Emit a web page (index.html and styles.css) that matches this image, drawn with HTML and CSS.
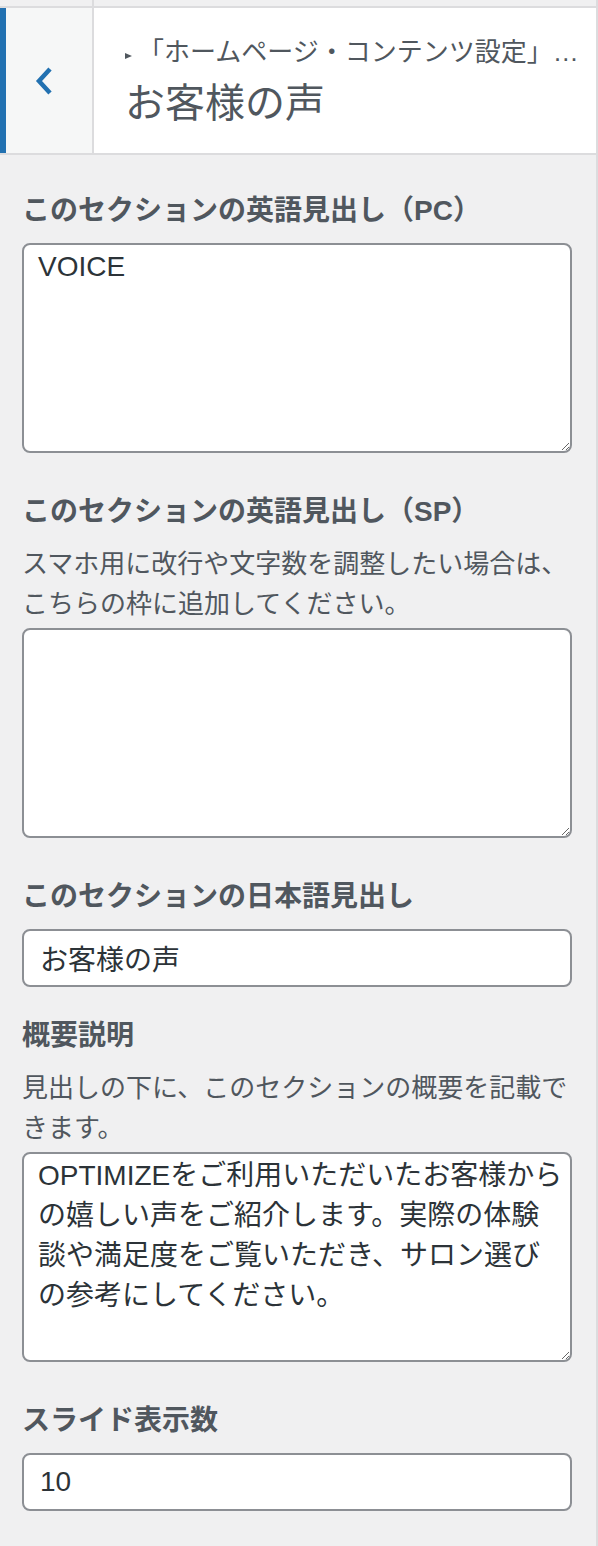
FILE: index.html
```html
<!DOCTYPE html>
<html lang="ja">
<head>
  <meta charset="UTF-8">
  <meta name="viewport" content="width=device-width, initial-scale=1.0">
  <title>お客様の声 - カスタマイズ</title>
  <link rel="stylesheet" href="styles.css">
</head>
<body>
  <div class="sidebar">
    <div class="prev-section"><span class="prev-back"></span></div>

    <div class="section-meta">
      <button class="back-btn" type="button" aria-label="戻る">
        <svg width="24" height="32" viewBox="0 0 24 32">
          <polyline points="18,4 7,16 18,28" fill="none" stroke="#2271b1" stroke-width="4.5"/>
        </svg>
      </button>
      <div class="section-title">
        <span class="customize-action"><span class="arrow"></span>「ホームページ・コンテンツ設定」…</span>
        <h3>お客様の声</h3>
      </div>
    </div>

    <ul class="controls">
      <li class="control">
        <label class="control-title" for="title-en-pc">このセクションの英語見出し（PC）</label>
        <textarea id="title-en-pc">VOICE</textarea>
      </li>
      <li class="control">
        <label class="control-title" for="title-en-sp">このセクションの英語見出し（SP）</label>
        <span class="description">スマホ用に改行や文字数を調整したい場合は、こちらの枠に追加してください。</span>
        <textarea id="title-en-sp"></textarea>
      </li>
      <li class="control">
        <label class="control-title" for="title-ja">このセクションの日本語見出し</label>
        <input type="text" id="title-ja" value="お客様の声">
      </li>
      <li class="control">
        <label class="control-title" for="summary">概要説明</label>
        <span class="description">見出しの下に、このセクションの概要を記載できます。</span>
        <textarea id="summary">OPTIMIZEをご利用いただいたお客様からの嬉しい声をご紹介します。実際の体験談や満足度をご覧いただき、サロン選びの参考にしてください。</textarea>
      </li>
      <li class="control">
        <label class="control-title" for="slide-count">スライド表示数</label>
        <input type="text" id="slide-count" value="10">
      </li>
    </ul>
  </div>
</body>
</html>
```

FILE: styles.css
```css
body {
  margin: 0;
  background-color: #f0f0f1;
  font-family: "Liberation Sans", "Noto Sans CJK JP", sans-serif;
  color: #50575e;
}

.sidebar {
  width: 596px;
  min-height: 100vh;
  border-right: 2px solid #dcdcde;
}

.prev-section {
  height: 6px;
}

.prev-back {
  display: block;
  width: 92px;
  height: 6px;
  border-right: 2px solid #dcdcde;
}

.section-meta {
  display: flex;
  background: #fff;
  border-top: 2px solid #dcdcde;
  border-bottom: 2px solid #dcdcde;
}

.back-btn {
  flex: none;
  width: 94px;
  display: flex;
  align-items: center;
  justify-content: center;
  padding: 0 10px 0 0;
  border: 0;
  border-left: 6px solid #2271b1;
  border-right: 2px solid #dcdcde;
  background: #f6f7f7;
  cursor: pointer;
}

.section-title {
  flex: 1;
  min-width: 0;
  overflow: hidden;
  padding: 26px 0 26px 31px;
}

.customize-action {
  display: block;
  font-size: 26px;
  line-height: 36px;
  white-space: nowrap;
}

.arrow {
  display: inline-block;
  width: 0;
  height: 0;
  border-left: 7px solid #50575e;
  border-top: 3.5px solid transparent;
  border-bottom: 3.5px solid transparent;
  margin-right: 6px;
  vertical-align: 2px;
}

.section-title h3 {
  margin: 9px 0 0;
  font-size: 40px;
  line-height: 48px;
  font-weight: 400;
}

.controls {
  list-style: none;
  margin: 0;
  padding: 36px 24px 0 22px;
}

.control {
  padding-bottom: 29px;
}

.control-title {
  display: block;
  font-size: 28px;
  line-height: 40px;
  font-weight: 700;
  margin-bottom: 12px;
}

.description {
  display: block;
  font-size: 26px;
  line-height: 40px;
  margin-bottom: 4px;
}

textarea,
input {
  display: block;
  width: 100%;
  box-sizing: border-box;
  margin: 0;
  border: 2px solid #8c8f94;
  border-radius: 8px;
  background: #fff;
  color: #2c3338;
  font-family: inherit;
  font-size: 28px;
  outline: none;
}

textarea {
  height: 210px;
  line-height: 40px;
  padding: 2px 4px 0 14px;
  margin-bottom: 10px;
  resize: vertical;
}

input {
  height: 58px;
  padding: 0 16px;
}
```
